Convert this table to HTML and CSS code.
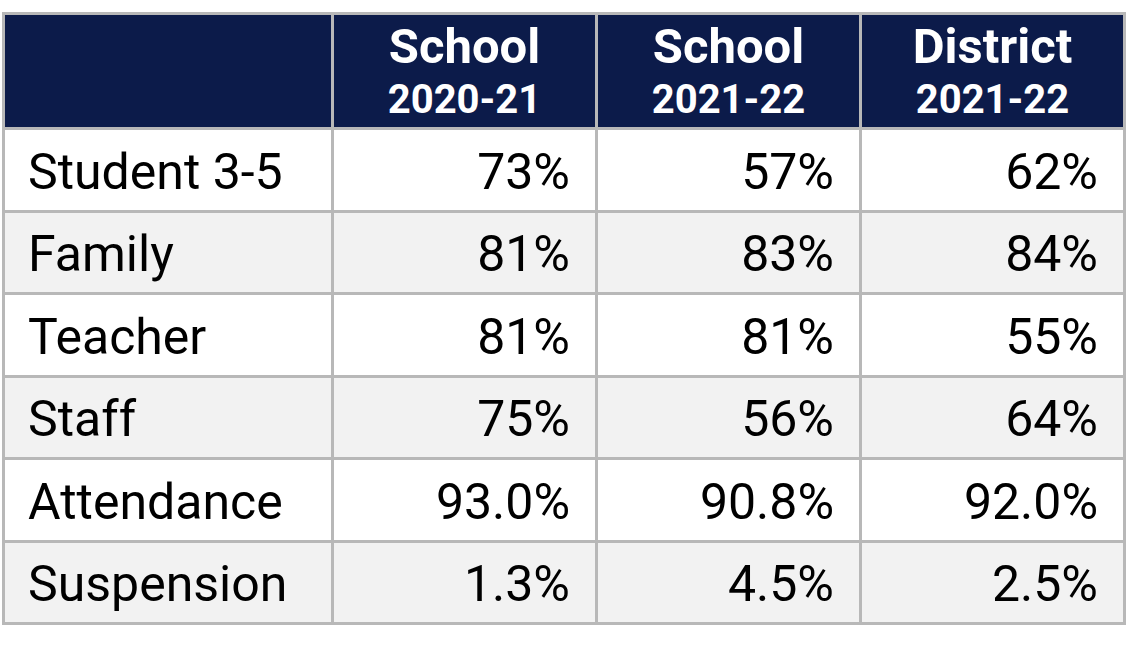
FILE: index.html
```html
<!DOCTYPE html>
<html lang="en">
<head>
<meta charset="utf-8">
<title>School Climate</title>
<link rel="stylesheet" href="styles.css">
</head>
<body>
<table class="stats">
  <thead>
    <tr>
      <th class="label-col"></th>
      <th><span class="h-title">School</span><span class="h-year">2020-21</span></th>
      <th><span class="h-title">School</span><span class="h-year">2021-22</span></th>
      <th><span class="h-title">District</span><span class="h-year">2021-22</span></th>
    </tr>
  </thead>
  <tbody>
    <tr><td class="label">Student 3-5</td><td>73%</td><td>57%</td><td>62%</td></tr>
    <tr class="alt"><td class="label">Family</td><td>81%</td><td>83%</td><td>84%</td></tr>
    <tr><td class="label">Teacher</td><td>81%</td><td>81%</td><td>55%</td></tr>
    <tr class="alt"><td class="label">Staff</td><td>75%</td><td>56%</td><td>64%</td></tr>
    <tr><td class="label">Attendance</td><td>93.0%</td><td>90.8%</td><td>92.0%</td></tr>
    <tr class="alt"><td class="label">Suspension</td><td>1.3%</td><td>4.5%</td><td>2.5%</td></tr>
  </tbody>
</table>
</body>
</html>
```
FILE: styles.css
```css
html, body {
  margin: 0;
  padding: 0;
  background: #ffffff;
}

body {
  padding: 12px 0 0 2px;
  font-family: Roboto, "Liberation Sans", Arial, sans-serif;
  color: #000000;
}

.stats {
  border-collapse: separate;
  border-spacing: 0;
  table-layout: fixed;
  width: 1124px;
  border-left: 3px solid #b8b8b8;
  border-top: 3px solid #b8b8b8;
}

.stats th,
.stats td {
  border-right: 3px solid #b8b8b8;
  border-bottom: 3px solid #b8b8b8;
  padding: 0;
}

.stats th {
  background: #0c1b4a;
  color: #ffffff;
  height: 112px;
  width: 261px;
  text-align: center;
  vertical-align: top;
  font-weight: 700;
}

.stats th.label-col {
  width: 326px;
}

.h-title {
  display: block;
  font-size: 49px;
  line-height: 48px;
  padding-top: 8px;
}

.h-year {
  display: block;
  font-size: 40px;
  line-height: 40px;
  padding-top: 9px;
}

.stats td {
  height: 75.5px;
  font-size: 50px;
  line-height: 58px;
  padding-top: 4px;
  text-align: right;
  padding-right: 25px;
  vertical-align: middle;
  background: #ffffff;
}

.stats td.label {
  text-align: left;
  padding-left: 23px;
  padding-right: 0;
}

.stats tr.alt td {
  background: #f2f2f2;
}
```
